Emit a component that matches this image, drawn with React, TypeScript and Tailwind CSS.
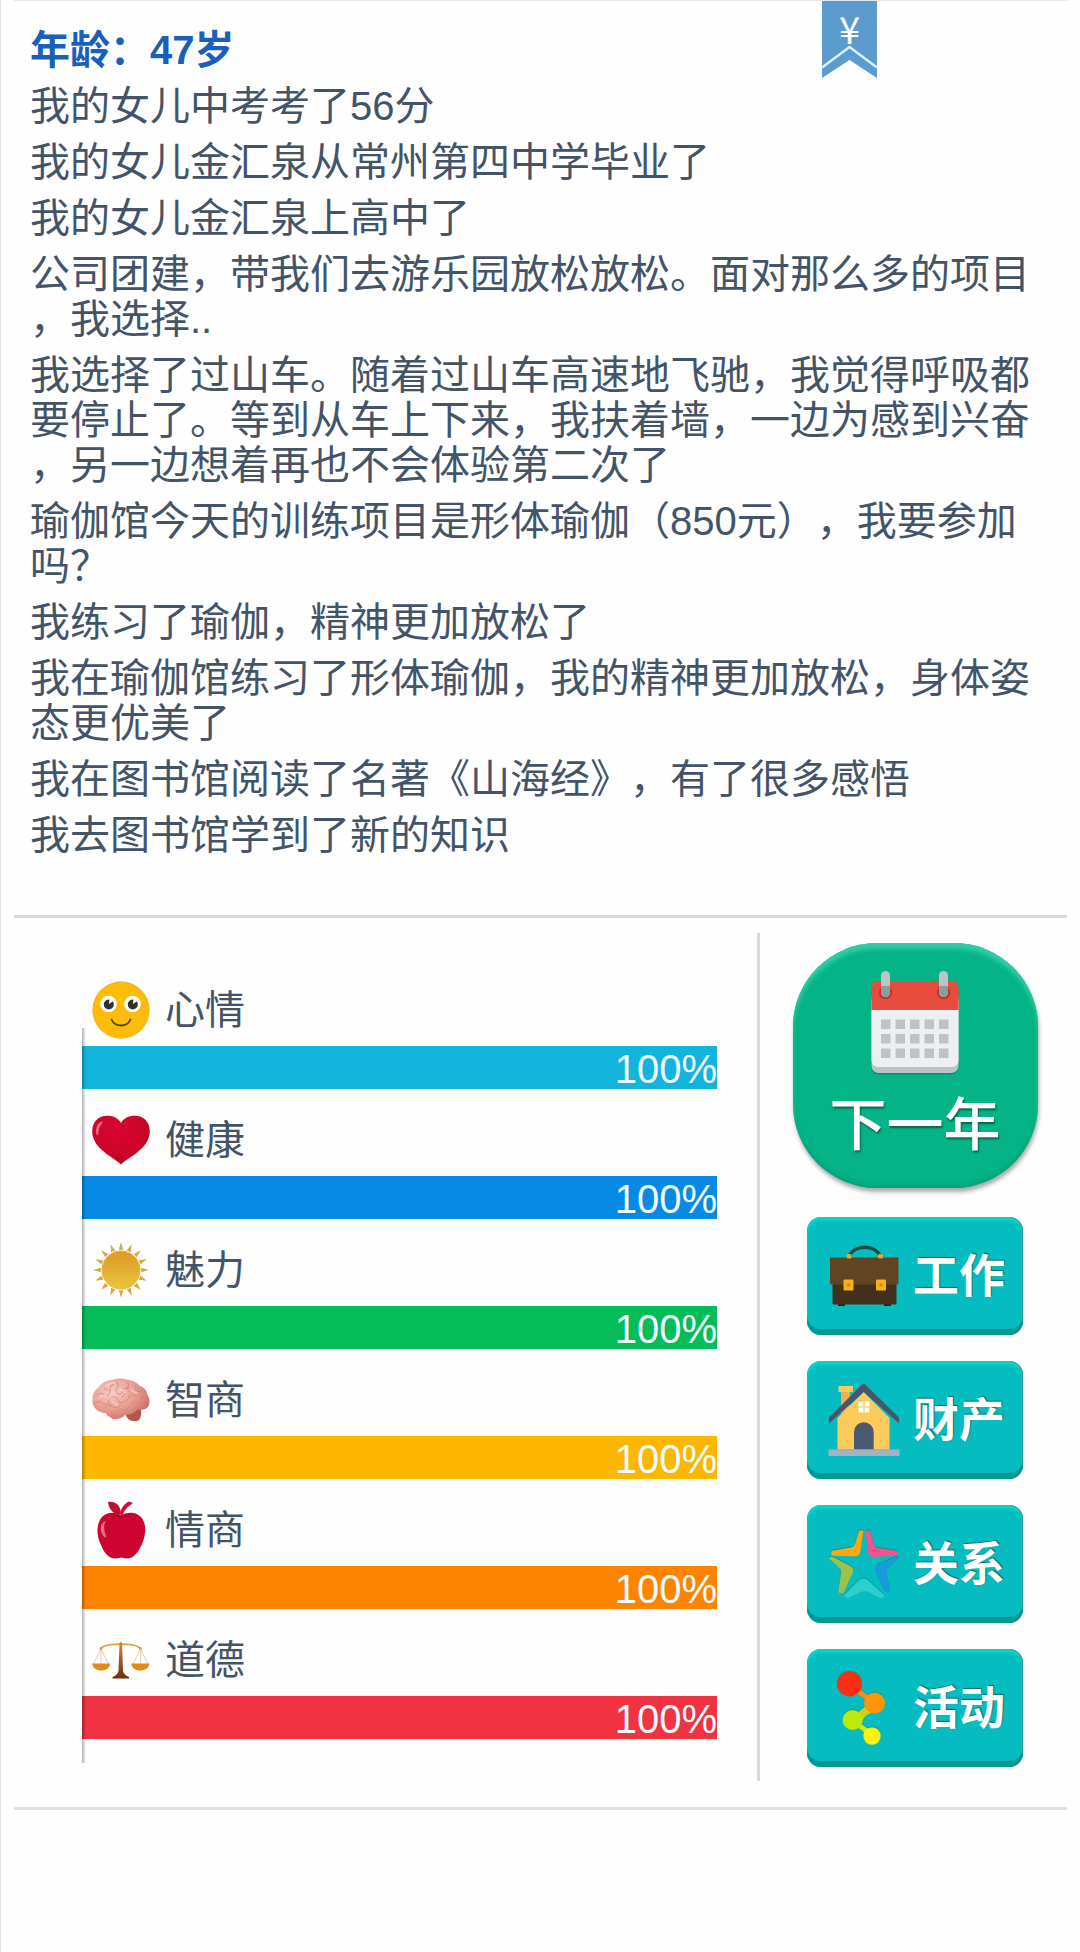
import React from 'react';
import { clsx } from 'clsx';

const story = [
  '我的女儿中考考了56分',
  '我的女儿金汇泉从常州第四中学毕业了',
  '我的女儿金汇泉上高中了',
  '公司团建，带我们去游乐园放松放松。面对那么多的项目，我选择..',
  '我选择了过山车。随着过山车高速地飞驰，我觉得呼吸都要停止了。等到从车上下来，我扶着墙，一边为感到兴奋，另一边想着再也不会体验第二次了',
  '瑜伽馆今天的训练项目是形体瑜伽（850元），我要参加吗？',
  '我练习了瑜伽，精神更加放松了',
  '我在瑜伽馆练习了形体瑜伽，我的精神更加放松，身体姿态更优美了',
  '我在图书馆阅读了名著《山海经》，有了很多感悟',
  '我去图书馆学到了新的知识',
];

function SmileIcon() {
  return (
    <svg viewBox="0 0 58 58" className="size-[58px] shrink-0">
      <circle cx="29" cy="29" r="28.5" fill="#fdbc0a" />
      <circle cx="29" cy="29" r="28" fill="none" stroke="#f6b52c" />
      {[16.5, 40.5].map((x) => (
        <g key={x}>
          <circle cx={x} cy="23" r="8.3" fill="#fff" />
          <circle cx={x + 0.3} cy="23.5" r="5" fill="#33312f" />
          <path d={`M${x + 0.5} 23 L${x + 1} 17.5 L${x + 6} 19 Z`} fill="#fff" />
        </g>
      ))}
      <path d="M19.5 38.5C23 46.5 35 46.5 38.5 38.5" fill="none" stroke="#5c4208" strokeWidth="1.8" strokeLinecap="round" />
    </svg>
  );
}

function HeartIcon() {
  return (
    <svg viewBox="0 0 58 58" className="size-[58px] shrink-0">
      <defs>
        <radialGradient id="heart" cx="0.4" cy="0.3" r="0.75">
          <stop offset="0" stopColor="#d90433" />
          <stop offset="0.7" stopColor="#cb0528" />
          <stop offset="1" stopColor="#9c0d1c" />
        </radialGradient>
      </defs>
      <path d="M29 53.5C21 45.5 0.5 38 0.2 20.5C0.2 10 7 5 15 4.8C22 4.8 26.5 7.5 29 12C31.5 7.5 36 4.8 43 4.8C51 5 57.8 10 57.8 20.5C57.5 38 37 45.5 29 53.5Z" fill="url(#heart)" />
      <path d="M4 21C4 15 6 11 11 10.5C9.5 14 7 15 6.5 22C6 26 4 24 4 21Z" fill="#ef7c90" opacity="0.8" />
    </svg>
  );
}

function SunIcon() {
  const rays = Array.from({ length: 16 }, (_, i) => i * 22.5);
  return (
    <svg viewBox="0 0 58 58" className="size-[58px] shrink-0">
      <defs>
        <linearGradient id="sun" x1="0" y1="0" x2="0" y2="1">
          <stop offset="0" stopColor="#dc9826" />
          <stop offset="1" stopColor="#e9c63c" />
        </linearGradient>
      </defs>
      {rays.map((a) => (
        <path key={a} d="M29 1.2L31.3 8.8L26.7 8.8Z" fill="#d3ab3f" transform={`rotate(${a} 29 29)`} />
      ))}
      <circle cx="29" cy="29" r="19" fill="url(#sun)" stroke="#e9b04a" />
    </svg>
  );
}

function BrainIcon() {
  return (
    <svg viewBox="0 0 58 58" className="size-[58px] shrink-0">
      <defs>
        <radialGradient id="brain" cx="0.35" cy="0.35" r="0.7">
          <stop offset="0" stopColor="#f6cdc6" />
          <stop offset="0.6" stopColor="#e99d91" />
          <stop offset="1" stopColor="#cf7066" />
        </radialGradient>
      </defs>
      <path d="M33 43L36 48Q42 52 47 49Q50 45 49 38L36 39Z" fill="#b3554c" />
      <path d="M0.5 31C0 25 2 19 6 17C9 12 15 9 20 9C25 7 32 7 36 9C41 9 45 12 48 15C53 17 55 20 55 23C58 27 58.5 34 55 37C51 40 48 38 45 38C43 43 37 44 33 44C30 48 21 50 18 46C14 45 15 42 13 42C8 42 1 38 0.5 31Z" fill="url(#brain)" />
      <g fill="none" stroke="#d0837a" strokeWidth="0.8" strokeLinecap="round">
        <path d="M5 24q4-4 7 0t6-3q-1-5 3-8M3 32q4-3 7 0t6 0M12 18q3-1 4 2M24 10q4 4 1 7t1 6q4 1 5-3t6-3M35 11q3 3 1 5t2 5M44 14q-2 4 1 6t5 0M13 36q4-3 8 0t8-3M20 26q5-1 6 3t6 2t5-5t7-1M38 33q3-3 6-1t5-3t5 0M24 41q3-4 7-2t7-4M17 29q-2 3 2 5M48 25q3-1 5 2M30 26l3-3M41 38q3-2 6-1" />
      </g>
      <path d="M7 27q4-4 8-1M14 15q5-4 9-3M28 19q4-1 5 3M20 31q4 1 6 4M39 19q4 3 7 3" fill="none" stroke="#fae3de" strokeWidth="1.2" opacity="0.7" />
    </svg>
  );
}

function AppleIcon() {
  return (
    <svg viewBox="0 0 58 58" className="size-[58px] shrink-0">
      <path d="M29 15C27 8 33 3 36.5 0.5L41 2C36 6 32 8 31 15Z" fill="#cf0a35" />
      <path d="M29 13.5C22 14 17 9 16 1C23 0 29 4 29 13.5Z" fill="#c00f30" />
      <path d="M29.5 15C34 10.5 44 10.5 49 16C55 23 54 34 50 43C46 52 41 58 34.5 57.5C31.5 57.5 31 56.5 29.5 56.5C28 56.5 27 57.5 24 57.5C17 58 12 52 8.5 43C4.5 34 4 23 10 16C15 10.5 25 10.5 29.5 15Z" fill="#cd0430" />
      <path d="M21 13.5Q29.5 18.5 38 13.5" fill="none" stroke="#a30526" strokeWidth="1.2" />
      <path d="M9 30C8 24 10 21 14 20C11 24 12 30 14 35C15 39 10 35 9 30Z" fill="#f08ba0" opacity="0.8" />
    </svg>
  );
}

function ScalesIcon() {
  return (
    <svg viewBox="0 0 58 58" className="size-[58px] shrink-0">
      <defs>
        <linearGradient id="post" x1="0" y1="0" x2="0" y2="1">
          <stop offset="0" stopColor="#d08a34" />
          <stop offset="1" stopColor="#6e2c0c" />
        </linearGradient>
      </defs>
      <path d="M9 18L1.5 33M9 18L16.5 33M9 18V33M48.5 18L41 33M48.5 18L56 33M48.5 18V33" stroke="#e3c9a2" strokeWidth="0.9" />
      <path d="M8.5 17.5C14 12 22 14 28.7 13C35 14 43 12 48.5 17.5" fill="none" stroke="#e2a545" strokeWidth="1.8" />
      <circle cx="9" cy="17.5" r="1.6" fill="#dba256" />
      <circle cx="48.5" cy="17.5" r="1.6" fill="#dba256" />
      <path d="M27.5 12Q28.7 10 30 12L31 40Q32 44 37 46V47.5H20.5V46Q25.5 44 26.5 40Z" fill="url(#post)" />
      <path d="M0.2 32.5H18.2C18 37 14 39.5 9.2 39.5C4.5 39.5 0.5 37 0.2 32.5ZM39.2 32.5H57.5C57 37 53 39.5 48.2 39.5C43.5 39.5 39.5 37 39.2 32.5Z" fill="#e38a17" />
    </svg>
  );
}

function CalendarIcon() {
  return (
    <svg viewBox="0 0 88 104" className="h-[104px] w-[88px]">
      <rect x="0.5" y="12" width="87" height="91.5" rx="7" fill="#04785a" opacity="0.6" />
      <rect x="0.5" y="20" width="87" height="82" rx="7" fill="#bcc3c7" />
      <path d="M0.5 30H87.5V89Q87.5 96 80.5 96H7.5Q0.5 96 0.5 89Z" fill="#ecf0f1" />
      <path d="M0.5 39V17Q0.5 10 7.5 10H80.5Q87.5 10 87.5 17V39Z" fill="#e74c3c" />
      {[14.5, 72.5].map((x) => (
        <g key={x}>
          <circle cx={x} cy="21.5" r="6.8" fill="#b83a2e" />
          <rect x={x - 4.5} y="0" width="9" height="26" rx="4.5" fill="#bdc3c7" />
          <path d={`M${x - 4.5} 15H${x + 4.5}V21.5A4.5 4.5 0 0 1 ${x - 4.5} 21.5Z`} fill="#8f9c9c" />
        </g>
      ))}
      {[48.5, 63, 77.5].map((y) =>
        [10, 24.5, 39, 53.5, 68].map((x) => <rect key={`${x}-${y}`} x={x} y={y} width="9.5" height="9.5" fill="#bfc3c6" />)
      )}
    </svg>
  );
}

function BriefcaseIcon() {
  return (
    <svg viewBox="0 0 72 72" className="size-[72px] shrink-0">
      <path d="M21 16.5C26 4 47 4 52.5 16.5" fill="none" stroke="#1d4a45" strokeWidth="3.5" />
      <rect x="10" y="62" width="7" height="4" fill="#2d2013" />
      <rect x="56" y="62" width="7" height="4" fill="#2d2013" />
      <rect x="4.5" y="40" width="64" height="24.5" rx="1.5" fill="#42301d" />
      <path d="M2 17.5H70.5V43Q70.5 44.5 69 44.5H3.5Q2 44.5 2 43Z" fill="#614520" />
      <rect x="18.5" y="14" width="5" height="4.5" rx="1.5" fill="#e4a92d" />
      <rect x="50" y="14" width="5" height="4.5" rx="1.5" fill="#e4a92d" />
      {[15.5, 48].map((x) => (
        <g key={x}>
          <rect x={x} y="39.5" width="10" height="11" rx="1" fill="#f4b21b" />
          <circle cx={x + 5} cy="45" r="2" fill="#d8920f" />
        </g>
      ))}
    </svg>
  );
}

function HouseIcon() {
  return (
    <svg viewBox="0 0 72 72" className="size-[72px] shrink-0">
      <path d="M13 7H22V24L13 30Z" fill="#f0ac4d" />
      <rect x="10.5" y="2" width="14.5" height="6" fill="#fcca5c" />
      <path d="M9.5 34L35.7 8L61.5 34V65.5H9.5Z" fill="#fdcb5b" />
      <path d="M1 33.5L35.7 -1L71 33.5V39.5L35.7 8L1 39.5Z" fill="#4b5568" />
      <rect x="30.5" y="17.5" width="11" height="11" rx="1" fill="#fffdf0" />
      <path d="M36 17V29M30 23H42" stroke="#f6d992" strokeWidth="1.5" />
      <path d="M26 65.5V48A9.8 9.8 0 0 1 45.7 48V65.5Z" fill="#4a5b70" />
      <rect x="0.5" y="65.5" width="71" height="6.5" fill="#a3b3bf" />
    </svg>
  );
}

function StarIcon() {
  return (
    <svg viewBox="0 0 72 72" className="size-[72px] shrink-0 drop-shadow-[0_-1px_0_#0b6f7288]" strokeWidth="2.5" strokeLinejoin="round">
      <path d="M32 4L34 3.5L31 24Q30 27 27 27L4.5 26.5L4.5 24L24 20.5Q27 20 28 17Z" fill="#fba90f" stroke="#fba90f" />
      <path d="M39 3.5L41 4L45 17Q46 20.5 49 21L68 24L68 26.5L46 27.5Q42 27.5 41 24Z" fill="#f7528f" stroke="#f7528f" />
      <path d="M2.5 30L4.5 30L22 39Q25 41 23.5 44.5L14.5 64L11.5 63.5L14.5 44Q15 41 12.5 39Z" fill="#9dc14a" stroke="#9dc14a" />
      <path d="M69.5 30L68 30L51 38Q47.5 40 49 44L57 62L60.5 63.5L57.5 44.5Q57 41 59.5 39Z" fill="#189bdb" stroke="#189bdb" />
      <path d="M17.5 67.5L20 69L33 62.5Q36.5 61 40 62.5L53 69L55 67.5L39 53Q35.5 50 32 53Z" fill="#2bd0cd" stroke="#2bd0cd" />
    </svg>
  );
}

function ActivityIcon() {
  return (
    <svg viewBox="0 0 72 72" className="size-[72px] shrink-0 overflow-visible drop-shadow-[0_-1px_0_#147c6088]">
      <path d="M21 12L46 31" stroke="#f3901a" strokeWidth="5" />
      <path d="M46 31L24 48" stroke="#d3cf10" strokeWidth="5" />
      <path d="M24 48L44 63" stroke="#cdea0c" strokeWidth="5" />
      <path d="M31 44Q36 43 38 36L43 41Q36 43 34 50Z" fill="#cfd60e" />
      <circle cx="21.5" cy="12" r="12.5" fill="#fb2e12" />
      <circle cx="46.5" cy="31" r="10.5" fill="#fd950b" />
      <circle cx="24.5" cy="48" r="10" fill="#bce80c" />
      <circle cx="44" cy="64" r="8.7" fill="#fdf407" />
    </svg>
  );
}

const stats = [
  { label: '心情', icon: SmileIcon, value: 100, color: 'bg-[#13b4dc]' },
  { label: '健康', icon: HeartIcon, value: 100, color: 'bg-[#078ae3]' },
  { label: '魅力', icon: SunIcon, value: 100, color: 'bg-[#04bd58]' },
  { label: '智商', icon: BrainIcon, value: 100, color: 'bg-[#feb700]' },
  { label: '情商', icon: AppleIcon, value: 100, color: 'bg-[#fe8400]' },
  { label: '道德', icon: ScalesIcon, value: 100, color: 'bg-[#f03241]' },
];

const actions = [
  { label: '工作', icon: BriefcaseIcon },
  { label: '财产', icon: HouseIcon },
  { label: '关系', icon: StarIcon },
  { label: '活动', icon: ActivityIcon },
];

export default function App() {
  return (
    <div
      lang="zh-CN"
      className="relative min-h-screen border-l border-[#e2e2e2] bg-[#fefefe] px-[13px] font-['Liberation_Sans','Noto_Sans_CJK_SC',sans-serif] text-[40px] text-[#435469]"
    >
      {/* Money ribbon */}
      <button className="absolute top-0 right-[203px] h-[78px] w-[55px]">
        <svg viewBox="0 0 55 78" className="absolute inset-0 h-[78px] w-[55px]">
          <path d="M0 1H55V78L27.5 60L0 78Z" fill="#5c9bcd" />
          <path d="M0 67.5L27.5 47L55 67.5" fill="none" stroke="#d9f1fd" strokeWidth="2.5" />
        </svg>
        <span className="relative flex h-[78px] justify-center font-['Noto_Sans_CJK_SC',sans-serif] text-[38px] leading-[56px] text-white">¥</span>
      </button>

      {/* Life log */}
      <main className="flex flex-col gap-[11px] border-t border-[#e8e8e8] px-4 pt-[27px] pb-[57px] leading-[45px] [line-break:anywhere] [text-spacing-trim:space-all]">
        <h1 className="font-bold text-[#1a5fb9]">年龄：47岁</h1>
        {story.map((line) => (
          <p key={line}>{line}</p>
        ))}
      </main>

      <div className="flex border-t-3 border-b-3 border-t-[#d7d9dc] border-b-[#e0e0e0] pt-[15px] pb-[26px]">
        {/* Stats */}
        <section className="flex-1 border-r-3 border-[#d9d9d9] pt-[26px] pr-[40px] pl-[68px]">
          <div className="relative pb-6">
            <div className="absolute top-[69px] bottom-0 left-0 z-10 w-1 bg-linear-to-r from-black/30 to-transparent" />
            {stats.map((s) => (
              <div key={s.label}>
                <div className="flex h-[87px] items-center gap-[15px] pt-[15px] pl-[10px] leading-[58px]">
                  <s.icon />
                  <span>{s.label}</span>
                </div>
                <div
                  className={clsx('h-[43px] text-right leading-[46px] text-[#f0fbff]', s.color)}
                  style={{ width: `${s.value}%` }}
                >
                  {s.value}%
                </div>
              </div>
            ))}
          </div>
        </section>

        {/* Actions */}
        <nav className="flex w-[307px] flex-col items-center gap-[26px] pt-[10px] pb-[14px] pl-[3px]">
          <button className="mb-[3px] flex size-[245px] flex-col items-center rounded-[84px] bg-[#04b486] pt-7 font-medium text-white shadow-[1px_4px_4px_#00000055,inset_0_6px_4px_#30cca6,inset_0_-3px_5px_#04a07b]">
            <CalendarIcon />
            <span className="mt-[18px] text-[57px] leading-[64px] [text-shadow:1px_2px_2px_#04654c]">下一年</span>
          </button>
          {actions.map((a) => (
            <button
              key={a.label}
              className="flex h-[118px] w-[216px] items-center justify-center gap-[13px] rounded-[14px] bg-[#05bdc0] pl-[3px] text-[46px] font-bold text-white shadow-[inset_0_-6px_0_#039896,inset_-1px_0_1px_#3a9a9c,inset_0_4px_3px_#0cd3cb]"
            >
              <a.icon />
              <span className="[text-shadow:1px_-1px_1px_#0a6a6c]">{a.label}</span>
            </button>
          ))}
        </nav>
      </div>
    </div>
  );
}
